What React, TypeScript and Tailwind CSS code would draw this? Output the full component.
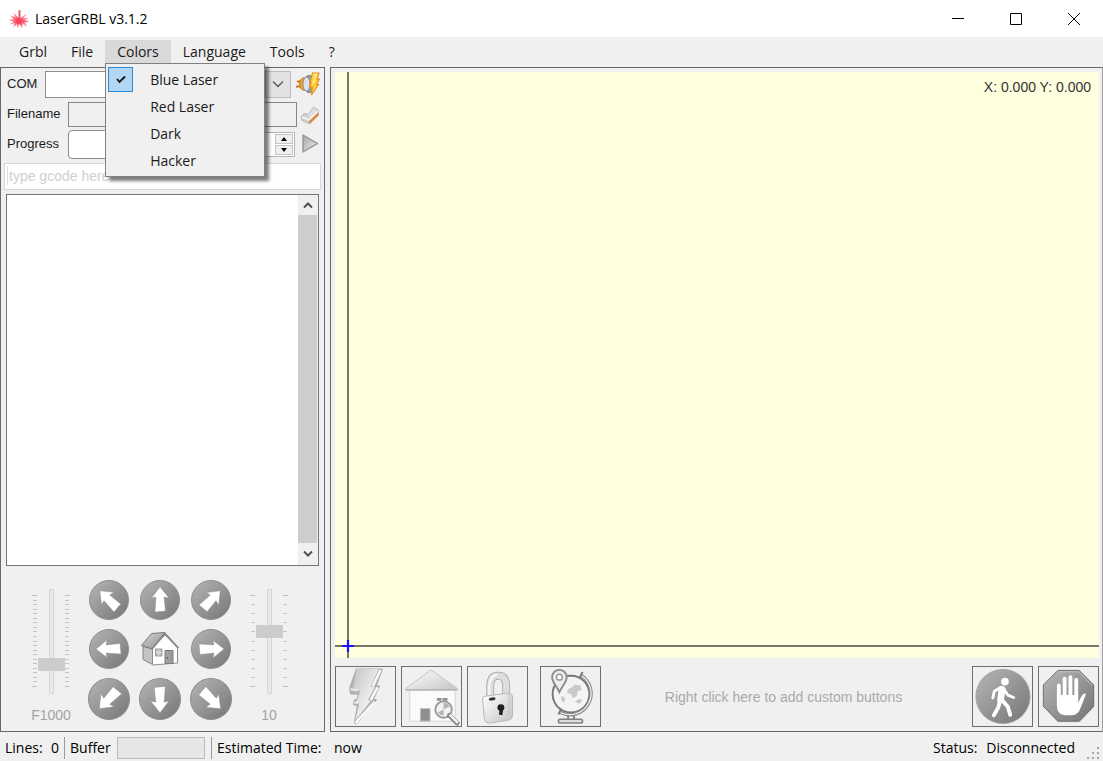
import React, { useState } from 'react';

const themes = ['Blue Laser', 'Red Laser', 'Dark', 'Hacker'];

const LaserLogo = () => (
  <svg viewBox="0 0 20 20" className="h-5 w-5" aria-hidden="true">
    <path
      d="M8.500 8L5 4.500 6.500 8.500 2 7l3 3.500-4.500.5L5 12.500 1.500 15l4.500-1-1.500 4 3.500-3 .5 3.500 2-3.500 2.500 3.500.5-4 4 2.500-2-3.500 4.500-1-4.500-1.500L19 9l-5 .5 3-4-4.500 3z"
      fill="#fb5f74"
      stroke="#fca3ae"
      strokeWidth=".6"
    />
    <path d="M10.500 1v10" stroke="#f0919c" strokeWidth="2.400" />
    <path d="M10.500 2v10" stroke="#e0566a" strokeWidth="1" />
    <circle cx="10" cy="12" r="3" fill="#fa4760" />
  </svg>
);

const PlugIcon = () => (
  <svg viewBox="0 0 24 24" className="h-6 w-6" aria-hidden="true">
    <path d="M1 9.500h5M0 14.500h6" stroke="#c9781a" strokeWidth="2.200" />
    <path d="M9 6H6.500Q3.500 8 3.500 12t3 6H9z" fill="#f5a02e" stroke="#c27a22" />
    <ellipse cx="13" cy="12" rx="5.500" ry="8.500" fill="#99a3ad" stroke="#6d747c" />
    <ellipse cx="10.500" cy="12" rx="3.500" ry="7" fill="#dde3ea" stroke="#7d858e" strokeWidth=".8" />
    <path d="M16.500 1H23l-2 6h2.500L20.500 12.500h2L15.500 23l.8-8H13.500l1.500-4.500h-1z" fill="#ffd23c" stroke="#ea8a1e" strokeWidth="1.100" />
    <path d="M17.500 2.500h3l-3.500 9" fill="none" stroke="#fff2a0" strokeWidth="1.300" />
  </svg>
);

const OpenIcon = () => (
  <svg viewBox="0 0 20 20" className="h-5 w-5" aria-hidden="true">
    <path d="M1 11.500L4.500 8.500 8 9.500 13.500 2l5 3.500v4.500L9.500 19 2 15.500z" fill="#cfcfcf" stroke="#b0b0b0" strokeWidth=".8" />
    <path d="M8 10l5.500-7 4 3-7.500 8z" fill="#dedede" />
    <path d="M2 12l7 3 9-9" fill="none" stroke="#f8f8f8" strokeWidth="1.400" />
    <path d="M9.500 19l9-8.500V7.500l-9.500 8.500z" fill="#dc8a3a" />
  </svg>
);

const PlayIcon = () => (
  <svg viewBox="0 0 18 20" className="h-5 w-[18px]" aria-hidden="true">
    <defs>
      <linearGradient id="play" x1="0" y1="0" x2="1" y2="1">
        <stop offset="0" stopColor="#a8a8a8" />
        <stop offset="1" stopColor="#ececec" />
      </linearGradient>
    </defs>
    <path d="M2 1L16.500 9.500 2 18z" fill="url(#play)" stroke="#919191" strokeWidth="1.300" strokeLinejoin="round" />
  </svg>
);

const HomeIcon = () => (
  <svg viewBox="0 0 40 36" className="h-9 w-10" aria-hidden="true">
    <defs>
      <linearGradient id="roof" x1="0" y1="0" x2="1" y2="1">
        <stop offset="0" stopColor="#d8d8d8" />
        <stop offset="1" stopColor="#8b8b8b" />
      </linearGradient>
    </defs>
    <path d="M3 15l9.500 3v15.500L3 28.500z" fill="#c4c4c4" stroke="#858585" />
    <path d="M12.500 17L25 4l12.500 13v15l-25 2z" fill="#fff" stroke="#8d8d8d" />
    <path d="M1.500 14.500L11.500 2.500 25 1.500 12 18z" fill="url(#roof)" stroke="#777" />
    <path d="M12 18L25 2.500 38.500 17" fill="none" stroke="#858585" strokeWidth="1.500" />
    <path d="M15.500 18h6.500v7h-6.500z" fill="#c2c2c2" stroke="#9a9a9a" />
    <path d="M18.700 18.500v6M16 21.500h5.500" stroke="#dedede" />
    <path d="M25 19.500h8v13h-8z" fill="#a3a3a3" stroke="#777" />
    <path d="M28 22h3v8h-3" fill="none" stroke="#8d8d8d" />
    <circle cx="27.500" cy="27" r=".8" fill="#444" />
  </svg>
);

const Gradients = () => (
  <svg className="absolute h-0 w-0" aria-hidden="true">
    <defs>
      <linearGradient id="ball" x1="0" y1="0" x2="1" y2="1">
        <stop offset="0" stopColor="#b6b6b6" />
        <stop offset="1" stopColor="#757575" />
      </linearGradient>
      <linearGradient id="metal" x1="0" y1="0" x2="1" y2="1">
        <stop offset="0" stopColor="#fff" />
        <stop offset="1" stopColor="#c4c4c4" />
      </linearGradient>
      <linearGradient id="bolt" x1="0" y1="0" x2="1" y2="1">
        <stop offset="0" stopColor="#c4c4c4" />
        <stop offset=".6" stopColor="#ededed" />
        <stop offset="1" stopColor="#d5d5d5" />
      </linearGradient>
    </defs>
  </svg>
);

const BoltIcon = () => (
  <svg viewBox="0 0 61 61" className="h-full w-full" aria-hidden="true">
    <path d="M21 2h27l-6 17 3 1-6 13 3 1-21 25-2-1 3-18-4-1 1-5 3-1 1-5-8 0-1-6z" fill="#b5b5b5" stroke="#a2a2a2" strokeWidth=".8" />
    <path d="M21 2h23l-8 18 4 1-7 13 3 1-16 20 4-17-3-2 4-11-7-2z" fill="url(#bolt)" />
    <path d="M46 3l-8 17M43 21l-7 13M40 36L20 58" stroke="#fafafa" strokeWidth="2.500" fill="none" />
    <path d="M15 23l7 1M19 37h4" stroke="#eee" strokeWidth="2" />
  </svg>
);

const HomingIcon = () => (
  <svg viewBox="0 0 61 61" className="h-full w-full" aria-hidden="true">
    <path d="M8 23h47v33H8z" fill="#fbfbfb" stroke="#d5d5d5" />
    <path d="M30 3L4 22v2h53v-2z" fill="url(#metal)" stroke="#c4c4c4" strokeLinejoin="round" />
    <path d="M4 23.500h53" stroke="#b8b8b8" strokeWidth="1.500" />
    <path d="M19 43h10v13H19z" fill="#8f8f8f" stroke="#c0c0c0" />
    <path d="M36 32h5v3h-5zM42 32h5v3h-5z" fill="#909090" />
    <circle cx="43" cy="44" r="8.500" fill="#f3f3f3" stroke="#9b9b9b" strokeWidth="2" />
    <path d="M43 44V37a7 7 0 0 1 6 4zM43 44v6a7 7 0 0 1-6-3z" fill="#b5b5b5" />
    <path d="M49 50l8 8" stroke="#8b8b8b" strokeWidth="5" strokeLinecap="round" />
    <path d="M50 50l7 7" stroke="#f0f0f0" strokeWidth="2.500" strokeLinecap="round" />
  </svg>
);

const LockIcon = () => (
  <svg viewBox="0 0 61 61" className="h-full w-full" aria-hidden="true">
    <path d="M23 33V20Q23 9 31 9t8.500 10v12" fill="none" stroke="#9f9f9f" strokeWidth="8" />
    <path d="M23 33V20Q23 9 31 9t8.500 10v12" fill="none" stroke="#dedede" strokeWidth="6.500" />
    <path d="M22 32V19Q23 9 30 8" fill="none" stroke="#fafafa" strokeWidth="2" />
    <path d="M15 33q0-3 4-3l22-3q5 0 5 4v19q0 4-4 5l-20 3q-4 0-5-4z" fill="url(#metal)" stroke="#b5b5b5" />
    <path d="M41 28q4 0 4 4v18q0 4-4 4z" fill="#c9c9c9" opacity=".6" />
    <ellipse cx="25" cy="33" rx="3.500" ry="1.600" fill="#333" transform="rotate(-8 25 33)" />
    <circle cx="34" cy="42" r="3.600" fill="#1e1e1e" />
    <path d="M33 42l-1 7 3.500 1 1-8z" fill="#1e1e1e" />
  </svg>
);

const GlobeIcon = () => (
  <svg viewBox="0 0 61 61" className="h-full w-full" fill="none" aria-hidden="true">
    <circle cx="31" cy="28" r="19" fill="#f4f4f4" stroke="#777" strokeWidth="2" />
    <path d="M42 9a22 22 0 0 1-22 38" stroke="#8b8b8b" strokeWidth="3.500" />
    <path d="M42 9a22 22 0 0 1-22 38" stroke="#f3f3f3" strokeWidth="1.300" />
    <path d="M40 11l3-6M18 49l3-6" stroke="#777" strokeWidth="2" />
    <path d="M28 23l4-2 3-3 6 1 1 5-4 1-1 5-4 2-2-4-4-1zM21 30l4 2-1 5-3-2zM35 36l4-3 4 1-3 4z" fill="#c9c9c9" />
    <path d="M28 50v5M34 50v5" stroke="#858585" strokeWidth="2" />
    <rect x="18" y="54" width="25" height="4" rx="2" fill="#ddd" stroke="#828282" strokeWidth="1.600" />
    <path d="M19 26C16 19 11.500 16 11.500 10.500a7.500 7.500 0 0 1 15 0C26.500 16 22 19 19 26z" fill="#eee" stroke="#8d8d8d" strokeWidth="2" />
    <circle cx="19" cy="10.500" r="3" fill="#fff" stroke="#979797" strokeWidth="1.500" />
  </svg>
);

const WalkIcon = () => (
  <svg viewBox="0 0 61 61" className="h-full w-full" aria-hidden="true">
    <circle cx="31" cy="30.500" r="28" fill="url(#ball)" stroke="#a3a3a3" />
    <circle cx="33" cy="15" r="4" fill="#fff" />
    <g fill="none" stroke="#fff" strokeLinecap="round" strokeLinejoin="round">
      <path d="M30 23l-1.500 11" strokeWidth="7" />
      <path d="M28 21.500l-6 3.500-1.500 7M32 23l4 6 6 2.500" strokeWidth="3" />
      <path d="M28 35l-2 7-4.500 8M30 34l6 7 2.500 8.500" strokeWidth="4" />
    </g>
  </svg>
);

const HandIcon = () => (
  <svg viewBox="0 0 61 61" className="h-full w-full" aria-hidden="true">
    <path d="M19.500 5h23L57 19.500v22L42.500 57h-23L5 41.500v-22z" fill="#c9c9c9" />
    <path d="M19.500 3.500h22L56.500 18.500v22L41.500 56h-22L4.500 40.500v-22z" fill="url(#ball)" stroke="#6d6d6d" />
    <path d="M20 5h21l14 14" fill="none" stroke="#c4c4c4" />
    <path d="M20.500 35V19M26.500 32V12M32.500 32V10.500M38.500 34V13.500" stroke="#fff" strokeWidth="4" strokeLinecap="round" />
    <path d="M18.500 29h22v8l3-6q3-5 5-3l-5 13q-3 9-10 9h-6q-9-1-9-10z" fill="#fff" />
  </svg>
);

const JogButton: React.FC<{ name: string; angle: number; large?: boolean }> = ({ name, angle, large }) => (
  <button aria-label={name} className={large ? 'h-[42px] w-[42px]' : 'h-10 w-10'}>
    <svg viewBox="0 0 40 40" className="h-full w-full" aria-hidden="true">
      <circle cx="20" cy="20" r="19.500" fill="url(#ball)" stroke="#8e8e8e" />
      <path
        d="M20 7L11.500 18l4.500-1-1 15 10.500-1-1.500-14 5 1z"
        fill="#fff"
        stroke="#8a8a8a"
        strokeWidth=".4"
        transform={`rotate(${angle} 20 20)`}
      />
    </svg>
  </button>
);

const Ticks: React.FC<{ count: number; flip?: boolean }> = ({ count, flip }) => (
  <svg viewBox="0 0 5 105" className="h-[105px] w-[5px]" aria-hidden="true">
    {Array.from({ length: count }, (_, i) => {
      const end = i === 0 || i === count - 1;
      const y = Math.round(7 + (i * 91) / (count - 1)) + 0.5;
      return (
        <path
          key={i}
          d={flip ? `M0 ${y}h${end ? 5 : 4}` : `M${end ? 0 : 1} ${y}H5`}
          stroke="#c4c4c4"
        />
      );
    })}
  </svg>
);

const JogSlider: React.FC<{ id: string; label: string; ticks: number; start: number }> = ({ id, label, ticks, start }) => {
  const [value, setValue] = useState(start);
  return (
    <div className="flex w-10 flex-col items-center gap-3 pt-2">
      <div className="flex items-start">
        <Ticks count={ticks} />
        <input
          id={id}
          type="range"
          min={0}
          max={100}
          value={value}
          onChange={(e) => setValue(Number(e.target.value))}
          className="mx-[1px] h-[105px] w-7 appearance-none bg-transparent [direction:rtl] [writing-mode:vertical-lr] [&::-webkit-slider-runnable-track]:mx-auto [&::-webkit-slider-runnable-track]:w-[5px] [&::-webkit-slider-runnable-track]:border [&::-webkit-slider-runnable-track]:border-[#d6d6d6] [&::-webkit-slider-runnable-track]:bg-[#e8eaea] [&::-webkit-slider-thumb]:-ml-3 [&::-webkit-slider-thumb]:h-[13px] [&::-webkit-slider-thumb]:w-[27px] [&::-webkit-slider-thumb]:appearance-none [&::-webkit-slider-thumb]:bg-[#cccccc]"
        />
        <Ticks count={ticks} flip />
      </div>
      <label htmlFor={id} className="text-sm leading-4 text-[#a3a3a3]">{label}</label>
    </div>
  );
};

const ToolButton: React.FC<{ name: string; children: React.ReactNode }> = ({ name, children }) => (
  <button aria-label={name} className="h-[61px] w-[61px] shrink-0 border border-[#6e6e6e]">
    {children}
  </button>
);

const menuItem = 'h-6 px-3';

export default function App() {
  const [theme, setTheme] = useState('Blue Laser');
  const [command, setCommand] = useState('');

  return (
    <div className="flex min-h-screen flex-col bg-[#f0f0f0] font-['Open_Sans','Noto_Sans',sans-serif] text-sm text-[#1a1a1a]">
      <Gradients />

      {/* Title bar */}
      <header className="flex h-[37px] items-center bg-white pl-[9px]">
        <LaserLogo />
        <h1 className="ml-[6px] flex-1 text-sm text-black">LaserGRBL v3.1.2</h1>
        <button aria-label="Minimize" className="flex h-9 w-[58px] items-center justify-center">
          <svg viewBox="0 0 12 12" className="h-3 w-3"><path d="M0 5.500h12" stroke="#000" /></svg>
        </button>
        <button aria-label="Maximize" className="flex h-9 w-[58px] items-center justify-center">
          <svg viewBox="0 0 12 12" className="h-3 w-3"><path d="M.5.5h11v11H.5z" stroke="#000" fill="none" /></svg>
        </button>
        <button aria-label="Close" className="flex h-9 w-[58px] items-center justify-center">
          <svg viewBox="0 0 12 12" className="h-3 w-3"><path d="M0 0l12 12M12 0L0 12" stroke="#000" /></svg>
        </button>
      </header>

      {/* Menu bar */}
      <nav className="flex h-[30px] items-start pt-[3px] pl-[7px]">
        <button className={menuItem}>Grbl</button>
        <button className={menuItem}>File</button>
        <div className="relative">
          <button className="h-6 bg-[#d9d9d9] px-3">Colors</button>
          <div role="menu" className="absolute top-[23px] left-0 z-10 w-40 border border-[#808080] bg-[#f0f0f0] py-[2px] shadow-[4px_4px_3px_rgba(0,0,0,0.5)]">
            {themes.map((name) => (
              <button
                key={name}
                role="menuitemradio"
                aria-checked={theme === name}
                onClick={() => setTheme(name)}
                className="flex h-[27px] w-full items-center pl-[2px] text-left"
              >
                <span className={`flex h-[25px] w-[25px] items-center justify-center ${theme === name ? 'border border-[#2a8ad4] bg-[#b3d7f3]' : ''}`}>
                  {theme === name && (
                    <svg viewBox="0 0 12 12" className="h-3 w-3"><path d="M2 5l2.500 3L10 2.500" stroke="#111" strokeWidth="1.800" fill="none" /></svg>
                  )}
                </span>
                <span className="ml-[17px]">{name}</span>
              </button>
            ))}
          </div>
        </div>
        <button className={menuItem}>Language</button>
        <button className={menuItem}>Tools</button>
        <button className={menuItem}>?</button>
      </nav>

      <main className="flex flex-1 gap-[5px]">
        {/* Connection and jog panel */}
        <section className="flex w-[325px] shrink-0 flex-col border border-[#696969] font-['Liberation_Sans',Arial,sans-serif]">
          <div className="flex h-8 items-center pr-1 pl-[6px]">
            <label htmlFor="com" className="w-[38px] text-[13px]">COM</label>
            <div className="relative flex-1">
              <select id="com" className="block h-[27px] w-full appearance-none border border-[#8f8f8f] bg-white" />
              <span className="pointer-events-none absolute top-0 right-0 flex h-[27px] w-[26px] items-center justify-center border border-[#bdbdbd] bg-[#e2e2e2]">
                <svg viewBox="0 0 12 8" className="h-2 w-3"><path d="M1 1.500l5 5 5-5" stroke="#555" strokeWidth="1.300" fill="none" /></svg>
              </span>
            </div>
            <button aria-label="Connect" className="ml-[5px]"><PlugIcon /></button>
          </div>
          <div className="flex h-[29px] items-center pr-1 pl-[6px]">
            <label htmlFor="filename" className="w-[61px] text-[13px]">Filename</label>
            <input id="filename" readOnly className="h-[25px] min-w-0 flex-1 border border-[#858585] bg-[#f0f0f0] px-1" />
            <button aria-label="Open file" className="ml-[3px]"><OpenIcon /></button>
          </div>
          <div className="flex h-[30px] items-center pr-[5px] pl-[6px]">
            <span className="w-[61px] text-[13px]">Progress</span>
            <div role="progressbar" aria-label="Progress" className="h-[29px] flex-1 rounded border border-[#8c8c8c] bg-white" />
            <div className="ml-1 flex h-[25px] w-[60px] border border-[#b4b4bc] bg-white">
              <input aria-label="Passes" className="min-w-0 flex-1" />
              <div className="flex w-5 flex-col justify-between p-[1px]">
                <button aria-label="More passes" className="flex h-[10px] items-center justify-center border border-[#c4c4c4] bg-[#f0f0f0]">
                  <svg viewBox="0 0 8 4" className="h-1 w-2"><path d="M1 4l3-4 3 4z" /></svg>
                </button>
                <button aria-label="Fewer passes" className="flex h-[10px] items-center justify-center border border-[#c4c4c4] bg-[#f0f0f0]">
                  <svg viewBox="0 0 8 4" className="h-1 w-2"><path d="M1 0l3 4 3-4z" /></svg>
                </button>
              </div>
            </div>
            <button aria-label="Run program" className="ml-[6px]"><PlayIcon /></button>
          </div>
          <div className="mx-[3px] mt-1 flex h-[27px] border border-[#d9d9d9] bg-white pt-[2px] pb-1 pl-[2px]">
            <input
              aria-label="G-code command"
              placeholder="type gcode here"
              value={command}
              onChange={(e) => setCommand(e.target.value)}
              className="w-full border-l border-[#dcdcdc] pl-[1px] outline-none placeholder:text-[#cfcfcf]"
            />
          </div>

          {/* Console */}
          <div className="mx-[5px] mt-1 flex min-h-[200px] flex-1 justify-end border border-[#757575] bg-white">
            <div className="flex w-5 flex-col border-r border-[#f0f0f0] bg-[#cdcdcd]">
              <button aria-label="Scroll up" className="flex h-5 items-center justify-center bg-[#f0f0f0]">
                <svg viewBox="0 0 12 8" className="h-2 w-3"><path d="M2 6.500L6 2.500l4 4" stroke="#505050" strokeWidth="2" fill="none" /></svg>
              </button>
              <div className="flex-1" />
              <button aria-label="Scroll down" className="flex h-[22px] items-center justify-center bg-[#f0f0f0]">
                <svg viewBox="0 0 12 8" className="h-2 w-3"><path d="M2 1.500l4 4 4-4" stroke="#505050" strokeWidth="2" fill="none" /></svg>
              </button>
            </div>
          </div>

          {/* Jog controls */}
          <div className="flex h-[165px] items-start justify-center gap-[17px] pt-[14px] pr-[5px]">
            <JogSlider id="speed" label="F1000" ticks={21} start={25} />
            <div className="grid grid-cols-[42px_42px_42px] place-items-center gap-[9px]">
              <JogButton name="Up left" angle={-45} />
              <JogButton name="Up" angle={0} />
              <JogButton name="Up right" angle={45} />
              <JogButton name="Left" angle={-90} />
              <button aria-label="Home"><HomeIcon /></button>
              <JogButton name="Right" angle={90} />
              <JogButton name="Down left" angle={-135} large />
              <JogButton name="Down" angle={180} large />
              <JogButton name="Down right" angle={135} large />
            </div>
            <JogSlider id="step" label="10" ticks={11} start={61} />
          </div>
        </section>

        {/* Preview and custom buttons */}
        <section className="flex min-w-0 flex-1 flex-col border border-[#696969] border-r-[#a0a0a0] p-1 pr-[3px] font-['Liberation_Sans',Arial,sans-serif]">
          <div className="relative flex-1 bg-[#ffffe0]">
            <div className="absolute inset-y-0 left-3 w-[2px] bg-[#77776a]" />
            <div className="absolute inset-x-0 bottom-[11px] h-[2px] bg-[#77776a]" />
            <svg viewBox="0 0 14 14" className="absolute bottom-[5px] left-[6px] h-[14px] w-[14px]">
              <path d="M7 1v12M1 7h12" stroke="#1414ff" strokeWidth="2.200" />
            </svg>
            <p className="absolute top-[5px] right-2 text-sm text-[#333]">X: 0.000 Y: 0.000</p>
          </div>
          <div className="flex items-center gap-[5px] pt-2">
            <ToolButton name="Connect laser"><BoltIcon /></ToolButton>
            <ToolButton name="Homing"><HomingIcon /></ToolButton>
            <ToolButton name="Unlock"><LockIcon /></ToolButton>
            <div className="ml-[7px] flex"><ToolButton name="Set zero"><GlobeIcon /></ToolButton></div>
            <p className="flex-1 pr-[6px] text-center text-[#a9a9a9]">Right click here to add custom buttons</p>
            <ToolButton name="Resume"><WalkIcon /></ToolButton>
            <ToolButton name="Stop"><HandIcon /></ToolButton>
          </div>
        </section>
      </main>

      {/* Status bar */}
      <footer className="flex h-[29px] items-center pt-[2px] pl-[5px] text-black">
        <span className="w-[46px]">Lines:</span>
        <span className="w-[13px]">0</span>
        <div className="h-[22px] border-l border-[#9c9c9c]" />
        <span className="ml-[5px] w-[47px]">Buffer</span>
        <div role="progressbar" aria-label="Buffer" className="h-[22px] w-[88px] border border-[#bcbcbc] bg-[#e6e6e6]" />
        <div className="ml-[6px] h-[22px] border-l border-[#9c9c9c]" />
        <span className="ml-[5px] w-[117px]">Estimated Time:</span>
        <span className="flex-1">now</span>
        <span>Status:</span>
        <span className="ml-[9px]">Disconnected</span>
        <svg viewBox="0 0 15 15" className="mt-3 mr-[2px] ml-[11px] h-[15px] w-[15px]" fill="#a5a5a5" aria-hidden="true">
          <path d="M11 1h2v2h-2zM6 6h2v2H6zM11 6h2v2h-2zM1 11h2v2H1zM6 11h2v2H6zM11 11h2v2h-2z" />
        </svg>
      </footer>
    </div>
  );
}
